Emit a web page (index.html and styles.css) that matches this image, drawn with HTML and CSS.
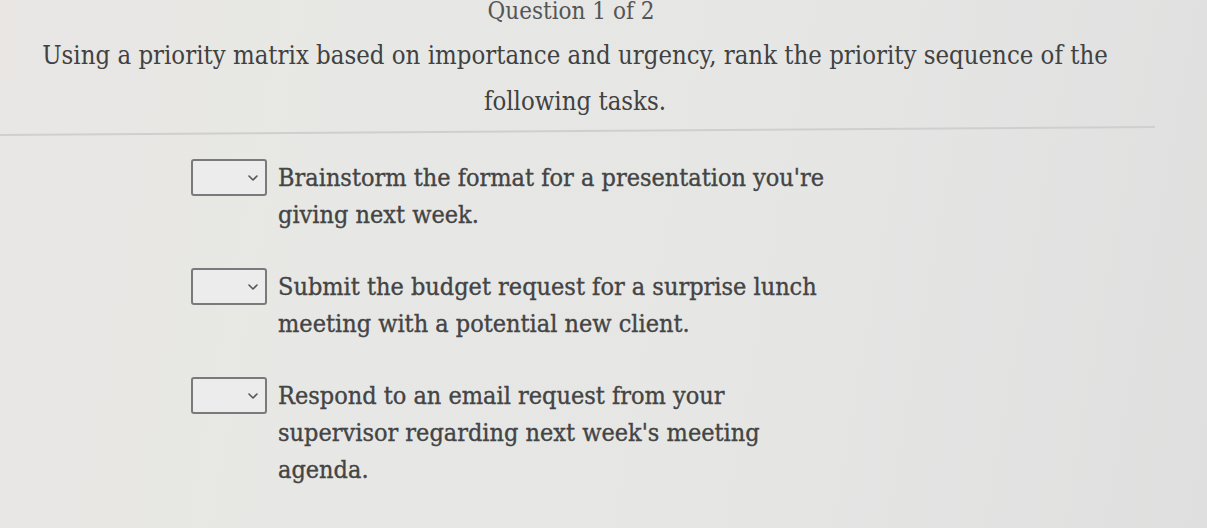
FILE: index.html
```html
<!DOCTYPE html>
<html lang="en">
<head>
<meta charset="utf-8">
<title>Question 1 of 2</title>
<link rel="stylesheet" href="styles.css">
</head>
<body>
<main class="page">
  <header class="header">
    <div class="counter">Question 1 of 2</div>
    <p class="prompt">Using a priority matrix based on importance and urgency, rank the priority sequence of the following tasks.</p>
  </header>
  <hr class="divider">
  <ul class="items">
    <li class="item">
      <span class="select"><svg class="chev" viewBox="0 0 10 6" width="10" height="6"><path d="M1 1 L5 5 L9 1" fill="none" stroke="#555" stroke-width="1.6" stroke-linecap="round" stroke-linejoin="round"/></svg></span>
      <span class="label">Brainstorm the format for a presentation you're giving next week.</span>
    </li>
    <li class="item">
      <span class="select"><svg class="chev" viewBox="0 0 10 6" width="10" height="6"><path d="M1 1 L5 5 L9 1" fill="none" stroke="#555" stroke-width="1.6" stroke-linecap="round" stroke-linejoin="round"/></svg></span>
      <span class="label">Submit the budget request for a surprise lunch meeting with a potential new client.</span>
    </li>
    <li class="item">
      <span class="select"><svg class="chev" viewBox="0 0 10 6" width="10" height="6"><path d="M1 1 L5 5 L9 1" fill="none" stroke="#555" stroke-width="1.6" stroke-linecap="round" stroke-linejoin="round"/></svg></span>
      <span class="label">Respond to an email request from your supervisor regarding next week's meeting agenda.</span>
    </li>
  </ul>
</main>
</body>
</html>
```
FILE: styles.css
```css
html, body {
  margin: 0;
  height: 100%;
}
body {
  background: linear-gradient(100deg, #e9e6e4 0%, #e7e8e5 30%, #e6e7e5 60%, #dfdfdf 100%);
  color: #3e3e3e;
  font-family: "DejaVu Serif Condensed", "DejaVu Serif", "Liberation Serif", serif;
  font-stretch: condensed;
  overflow: hidden;
}
.page {
  width: 1150px;
}
.header {
  text-align: center;
}
.counter {
  font-size: 24px;
  line-height: 22px;
  margin: 0 0 0 -8px;
  color: #555;
}
.prompt {
  font-size: 25.5px;
  line-height: 46px;
  margin: 10px 40px 0 40px;
  color: #414141;
}
.divider {
  border: 0;
  border-top: 2px solid #cfcfcf;
  margin: 10px 0 0 0;
  width: 1155px;
  transform: rotate(-0.4deg);
  transform-origin: left center;
}
.items {
  list-style: none;
  margin: 23px 0 0 191px;
  padding: 0;
  display: flex;
  flex-direction: column;
  gap: 35px;
}
.item {
  display: flex;
  align-items: flex-start;
  gap: 11px;
}
.select {
  box-sizing: border-box;
  width: 76px;
  height: 37px;
  border: 2px solid #7a7a7a;
  border-radius: 3px;
  background: #ececec;
  display: flex;
  align-items: center;
  justify-content: flex-end;
  padding-right: 7px;
  flex: none;
}
.label {
  font-size: 25px;
  line-height: 37px;
  max-width: 555px;
  color: #444;
  -webkit-text-stroke: 0.35px #444;
}
```
